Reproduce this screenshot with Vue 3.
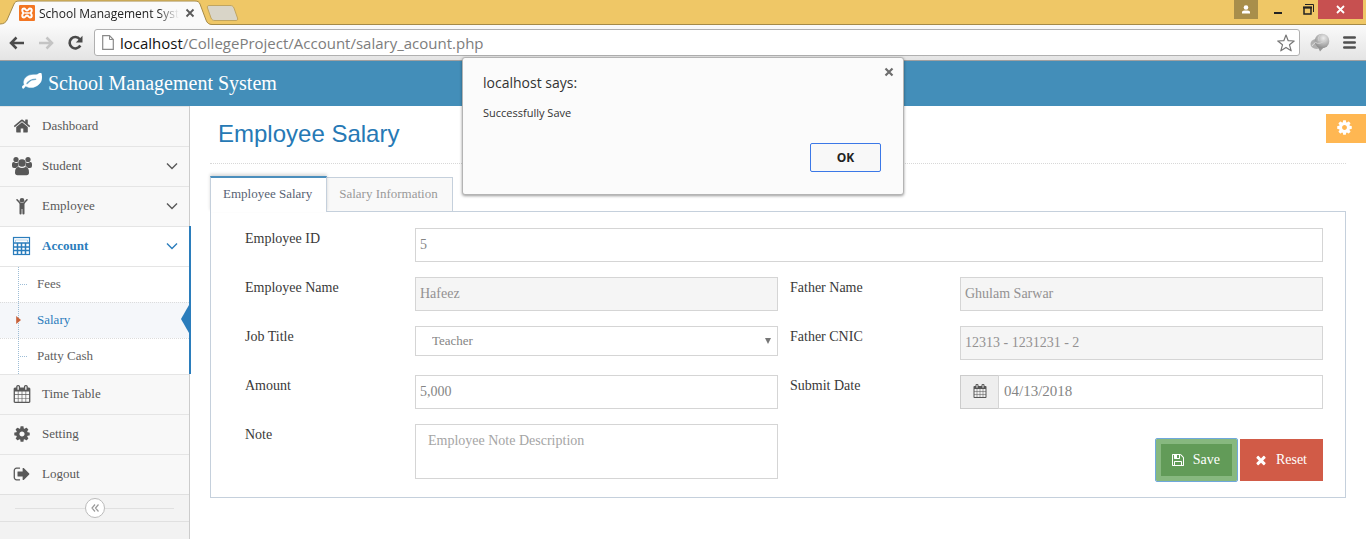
<script setup>
import { ref } from 'vue'

const FA = {
  home: 'M1472 992v480q0 26-19 45t-45 19h-384v-384h-256v384h-384q-26 0-45-19t-19-45v-480q0-1 .5-3t.5-3l575-474 575 474q1 2 1 6zm223-69l-62 74q-8 9-21 11h-3q-13 0-21-7l-692-577-692 577q-12 8-24 7-13-2-21-11l-62-74q-8-10-7-23.5t11-21.5l719-599q32-26 76-26t76 26l244 204v-195q0-14 9-23t23-9h192q14 0 23 9t9 23v408l219 182q10 8 11 21.5t-7 23.5z',
  cog: 'M1152 896q0-106-75-181t-181-75-181 75-75 181 75 181 181 75 181-75 75-181zm512-109v222q0 12-8 23t-20 13l-185 28q-19 54-39 91 35 50 107 138 10 12 10 25t-9 23q-27 37-99 108t-94 71q-12 0-26-9l-138-108q-44 23-91 38-16 136-29 186-7 28-36 28h-222q-14 0-24.5-8.5t-11.5-21.5l-28-184q-49-16-90-37l-141 107q-10 9-25 9-14 0-25-11-126-114-165-168-7-10-7-23 0-12 8-23 15-21 51-66.5t54-70.5q-27-50-41-99l-183-27q-13-2-21-12.5t-8-23.5v-222q0-12 8-23t19-13l186-28q14-46 39-92-40-57-107-138-10-12-10-24 0-10 9-23 26-36 98.5-107.5t94.5-71.5q13 0 26 10l138 107q44-23 91-38 16-136 29-186 7-28 36-28h222q14 0 24.5 8.5t11.5 21.5l28 184q49 16 90 37l142-107q9-9 24-9 13 0 25 10 129 119 165 170 7 8 7 22 0 12-8 23-15 21-51 66.5t-54 70.5q26 50 41 98l183 28q13 2 21 12.5t8 23.5z',
  calendar: 'M192 1664h288v-288h-288v288zm352 0h320v-288h-320v288zm-352-352h288v-320h-288v320zm352 0h320v-320h-320v320zm-352-384h288v-288h-288v288zm736 736h320v-288h-320v288zm-384-736h320v-288h-320v288zm768 736h288v-288h-288v288zm-384-352h320v-320h-320v320zm-352-864v-288q0-13-9.5-22.5t-22.5-9.5h-64q-13 0-22.5 9.5t-9.5 22.5v288q0 13 9.5 22.5t22.5 9.5h64q13 0 22.5-9.5t9.5-22.5zm736 864h288v-320h-288v320zm-384-384h320v-288h-320v288zm384 0h288v-288h-288v288zm32-480v-288q0-13-9.5-22.5t-22.5-9.5h-64q-13 0-22.5 9.5t-9.5 22.5v288q0 13 9.5 22.5t22.5 9.5h64q13 0 22.5-9.5t9.5-22.5zm384-64v1280q0 52-38 90t-90 38h-1408q-52 0-90-38t-38-90v-1280q0-52 38-90t90-38h128v-96q0-66 47-113t113-47h64q66 0 113 47t47 113v96h384v-96q0-66 47-113t113-47h64q66 0 113 47t47 113v96h128q52 0 90 38t38 90z',
  leaf: 'M1280 704q0-26-19-45t-45-19q-172 0-318 49.5t-259.5 134-235.5 219.5q-19 21-19 45 0 26 19 45t45 19q24 0 45-19 27-24 74-71t67-66q137-124 268.5-176t313.5-52q26 0 45-19t19-45zm512-198q0 95-20 193-46 224-184.5 383t-357.5 268q-214 108-438 108-148 0-286-47-15-5-88-42t-96-37q-16 0-39.5 32t-45 70-52.5 70-60 32q-43 0-63.5-17.5t-45.5-59.5q-2-4-6-11t-5.5-10-3-9.5-1.5-13.5q0-35 31-73.5t68-65.5 68-56 31-48q0-4-14-38t-16-44q-9-51-9-104 0-115 43.5-220t119-184.5 170.5-139 204-95.5q55-18 145-25.5t179.5-9 178.5-6 163.5-24 113.5-56.5l29.5-29.5 29.5-28 27-20 36.5-16 43.5-4.5q39 0 70.5 46t47.5 112 24 124 8 96z',
  floppy: 'M512 1536h768v-384h-768v384zm896 0h128v-896q0-14-10-38.5t-20-34.5l-281-281q-10-10-34-20t-39-10v416q0 40-28 68t-68 28h-576q-40 0-68-28t-28-68v-416h-128v1280h128v-416q0-40 28-68t68-28h832q40 0 68 28t28 68v416zm-384-928v-320q0-13-9.5-22.5t-22.5-9.5h-192q-13 0-22.5 9.5t-9.5 22.5v320q0 13 9.5 22.5t22.5 9.5h192q13 0 22.5-9.5t9.5-22.5zm640 32v928q0 40-28 68t-68 28h-1344q-40 0-68-28t-28-68v-1344q0-40 28-68t68-28h928q40 0 88 20t76 48l280 280q28 28 48 76t20 88z',
  times: 'M1490 1322q0 40-28 68l-136 136q-28 28-68 28t-68-28l-294-294-294 294q-28 28-68 28t-68-28l-136-136q-28-28-28-68t28-68l294-294-294-294q-28-28-28-68t28-68l136-136q28-28 68-28t68 28l294 294 294-294q28-28 68-28t68 28l136 136q28 28 28 68t-28 68l-294 294 294 294q28 28 28 68z',
  signout: 'M704 1440q0 4 1 20t.5 26.5-3 23.5-10 19.5-20.5 6.5h-320q-119 0-203.5-84.5t-84.5-203.5v-704q0-119 84.5-203.5t203.5-84.5h320q13 0 22.5 9.5t9.5 22.5q0 4 1 20t.5 26.5-3 23.5-10 19.5-20.5 6.5h-320q-66 0-113 47t-47 113v704q0 66 47 113t113 47h312l11.5 1 11.5 3 8 5.5 7 9 2 13.5zm928-544q0 26-19 45l-544 544q-19 19-45 19t-45-19-19-45v-288h-448q-26 0-45-19t-19-45v-384q0-26 19-45t45-19h448v-288q0-26 19-45t45-19 45 19l544 544q19 19 19 45z'
}

const menu = [
  { label: 'Dashboard', icon: 'home' },
  { label: 'Student', icon: 'users', children: true },
  { label: 'Employee', icon: 'child', children: true },
  {
    label: 'Account',
    icon: 'sheet',
    children: true,
    open: true,
    items: [{ label: 'Fees' }, { label: 'Salary', active: true }, { label: 'Patty Cash' }]
  },
  { label: 'Time Table', icon: 'calendar' },
  { label: 'Setting', icon: 'cog' },
  { label: 'Logout', icon: 'signout' }
]

const form = ref({
  id: '5',
  name: 'Hafeez',
  father: 'Ghulam Sarwar',
  job: 'Teacher',
  cnic: '12313 - 1231231 - 2',
  amount: '5,000',
  date: '04/13/2018',
  note: ''
})
const dialogOpen = ref(true)
</script>

<template>
  <div class="window">
    <header class="chrome">
      <div class="tabstrip">
        <div class="tab">
          <svg class="tab-shape" viewBox="0 0 212 25" aria-hidden="true">
            <path d="M0 25V24C4 24 6 22 7 20L14 4C15 2 16 1 19 1H195C198 1 199 2 200 4L206 20C207 23 209 24.500 212 24.500V25Z" fill="#fafafa" />
            <path d="M0 24C4 24 6 22 7 20L14 4C15 2 16 1 19 1H195C198 1 199 2 200 4L206 20C207 23 209 24.500 212 24.500" fill="none" stroke="#a58a47" />
          </svg>
          <svg class="favicon" viewBox="0 0 16 16" aria-hidden="true">
            <rect width="16" height="16" rx="1" fill="#f37623" />
            <path d="M5 3.500C3 3.500 2.500 6 4.500 8C2.500 10 3 12.500 5 12.500C6.500 12.500 6.500 10.500 8 10.500S9.500 12.500 11 12.500C13 12.500 13.500 10 11.500 8C13.500 6 13 3.500 11 3.500C9.500 3.500 9.500 5.500 8 5.500S6.500 3.500 5 3.500Z" fill="none" stroke="#fff" stroke-width="2" />
            <path d="M5.500 8H10.500" stroke="#fff" stroke-width="1.500" />
          </svg>
          <span class="tab-title">School Management System</span>
          <button class="bare tab-close" type="button" aria-label="Close tab">
            <svg width="10" height="10" viewBox="0 0 10 10"><path d="M1.500 1.500L8.500 8.500M8.500 1.500L1.500 8.500" stroke="#5a5a5a" stroke-width="1.800" /></svg>
          </button>
        </div>
        <button class="bare newtab" type="button" aria-label="New tab">
          <svg width="33" height="16" viewBox="0 0 33 16"><path d="M3 .5H24C26 .5 27 1 28 3L31.500 13C32 14.500 31.500 15.500 30 15.500H9C7 15.500 6 15 5 13L1.500 3C1 1.500 1.500 .5 3 .5Z" fill="#d9d5c8" stroke="#c0a560" /></svg>
        </button>
        <div class="controls">
          <button class="bare profile" type="button" aria-label="Profile">
            <svg width="10" height="9" viewBox="0 0 10 9"><circle cx="5" cy="2.500" r="2.300" fill="#fff" /><path d="M1 8.500V7C1 5.500 3 5.500 5 5.500S9 5.500 9 7V8.500Z" fill="#fff" /></svg>
          </button>
          <button class="bare minimize" type="button" aria-label="Minimize">
            <svg width="8" height="8" viewBox="0 0 8 8"><path d="M0 7H8" stroke="#222" stroke-width="2" /></svg>
          </button>
          <button class="bare restore" type="button" aria-label="Restore">
            <svg width="11" height="11" viewBox="0 0 11 11"><path d="M2 .5H10.500V8" fill="none" stroke="#222" /><path d="M1 3.500H8V10H1Z" fill="none" stroke="#222" stroke-width="1.500" /><path d="M0 3.500H9" stroke="#222" stroke-width="2" /></svg>
          </button>
          <button class="bare closewin" type="button" aria-label="Close">
            <svg width="9" height="9" viewBox="0 0 9 9"><path d="M1 1L8 8M8 1L1 8" stroke="#fff" stroke-width="1.800" /></svg>
          </button>
        </div>
      </div>
      <div class="toolbar">
        <button class="bare" type="button" aria-label="Back">
          <svg width="16" height="14" viewBox="0 0 16 14"><path d="M15 7H3M7.500 1.500L2 7L7.500 12.500" fill="none" stroke="#4a4a4a" stroke-width="2.500" /></svg>
        </button>
        <button class="bare" type="button" aria-label="Forward">
          <svg width="16" height="14" viewBox="0 0 16 14"><path d="M1 7H13M8.500 1.500L14 7L8.500 12.500" fill="none" stroke="#c4c4c4" stroke-width="2.500" /></svg>
        </button>
        <button class="bare" type="button" aria-label="Reload">
          <svg width="16" height="16" viewBox="0 0 16 16"><path d="M12.800 4.200A5.700 5.700 0 1 0 13.300 10.500" fill="none" stroke="#4a4a4a" stroke-width="2.600" /><path d="M15.500 .8V7.500H8.800Z" fill="#4a4a4a" /></svg>
        </button>
        <div class="omnibox">
          <svg width="12" height="15" viewBox="0 0 12 15" aria-hidden="true"><path d="M.7 .7H7.500L11.300 4.500V14.300H.7Z" fill="#fff" stroke="#8a8a8a" stroke-width="1.200" /><path d="M7.500 .7V4.500H11.300" fill="none" stroke="#8a8a8a" /></svg>
          <span class="url"><b>localhost</b>/CollegeProject/Account/salary_acount.php</span>
          <button class="bare" type="button" aria-label="Bookmark">
            <svg width="18" height="18" viewBox="0 0 18 18"><path d="M9 1L11.200 6.700L17.200 7L12.500 10.800L14.200 16.800L9 13.400L3.800 16.800L5.500 10.800L.8 7L6.800 6.700Z" fill="#fff" stroke="#777" stroke-width="1.200" stroke-linejoin="round" /></svg>
          </button>
        </div>
        <button class="bare" type="button" aria-label="Extension">
          <svg width="20" height="19" viewBox="0 0 20 19">
            <defs><radialGradient id="ball" cx=".6" cy=".3" r=".75"><stop offset="0" stop-color="#ececec" /><stop offset="1" stop-color="#888" /></radialGradient></defs>
            <ellipse cx="6.500" cy="11" rx="6" ry="5" fill="#b0b0b0" /><path d="M2 13Q5 8 9 10" fill="none" stroke="#ddd" />
            <path d="M8 14L10 18.500L14 14Z" fill="#959595" /><circle cx="12" cy="8" r="7.300" fill="url(#ball)" /><path d="M5 9Q9 13 17 6M10 2Q7 5 9 8" fill="none" stroke="#d0d0d0" />
          </svg>
        </button>
        <button class="bare" type="button" aria-label="Menu">
          <svg width="13" height="13" viewBox="0 0 13 13"><path d="M1.300 1.500H11.700M1.300 6.500H11.700M1.300 11.500H11.700" stroke="#505050" stroke-width="2.600" stroke-linecap="round" /></svg>
        </button>
      </div>
    </header>

    <div class="navbar">
      <a class="brand" href="#">
        <svg width="20" height="20" viewBox="0 150 1792 1792" aria-hidden="true"><path :d="FA.leaf" fill="#fff" stroke="#fff" stroke-width="40" /></svg>
        School Management System
      </a>
    </div>

    <div class="main">
      <nav class="sidebar">
        <ul class="menu">
          <li v-for="m in menu" :key="m.label" :class="{ open: m.open }">
            <a class="item" href="#">
              <svg v-if="m.icon === 'users'" class="micon" viewBox="0 0 20 20">
                <g fill="currentColor"><circle cx="4" cy="3.500" r="2.600" /><circle cx="16" cy="3.500" r="2.600" /><path d="M0 10V8Q0 5.800 2 6Q4 7.500 6 6.500Q5.500 9 7 10.300Q5 10.500 4 12H2Q0 12 0 10Z" /><path d="M20 10V8Q20 5.800 18 6Q16 7.500 14 6.500Q14.500 9 13 10.300Q15 10.500 16 12H18Q20 12 20 10Z" /><circle cx="10" cy="7" r="3.800" /><path d="M3 16.500Q3 11 6.500 11Q10 13 13.500 11Q17 11 17 16.500Q17 19.300 14.500 19.300H5.500Q3 19.300 3 16.500Z" /></g>
              </svg>
              <svg v-else-if="m.icon === 'child'" class="micon" viewBox="0 0 20 20">
                <circle cx="10" cy="4.200" r="2.300" fill="currentColor" /><path d="M5 3.800L8.500 7.500H11.500L15 3.800" fill="none" stroke="currentColor" stroke-width="1.600" stroke-linecap="round" stroke-linejoin="round" /><path d="M7.500 7H12.500V17.500Q12.500 18.500 11.500 18.500Q10.400 18.500 10.400 17.500V13H9.600V17.500Q9.600 18.500 8.500 18.500Q7.500 18.500 7.500 17.500Z" fill="currentColor" />
              </svg>
              <svg v-else-if="m.icon === 'sheet'" class="micon" viewBox="0 0 20 20">
                <rect x="1.500" y="1.500" width="16" height="17" fill="none" stroke="currentColor" stroke-width="1.200" /><path d="M3.500 6V4H15.500V6" fill="none" stroke="currentColor" opacity=".35" /><path d="M1.500 7H17.500M1.500 11H17.500M1.500 14.500H17.500M5.500 7V18.500M9.500 7V18.500M13.500 7V18.500" stroke="currentColor" stroke-width="1.500" />
              </svg>
              <svg v-else class="micon fa" viewBox="0 0 1792 1792"><path :d="FA[m.icon]" fill="currentColor" /></svg>
              <span class="mtext">{{ m.label }}</span>
              <svg v-if="m.children" width="12" height="8" viewBox="0 0 12 8"><path d="M1 1.500L6 6.500L11 1.500" fill="none" stroke="currentColor" stroke-width="1.400" /></svg>
            </a>
            <ul v-if="m.items" class="submenu">
              <li v-for="s in m.items" :key="s.label" :class="{ active: s.active }"><a href="#">{{ s.label }}</a></li>
            </ul>
          </li>
        </ul>
        <div class="collapse">
          <button class="bare" type="button" aria-label="Collapse menu">
            <svg width="8" height="8" viewBox="0 0 8 8"><path d="M4 .5L1 4L4 7.500M7.500 .5L4.500 4L7.500 7.500" fill="none" stroke="#999" stroke-width="1.200" /></svg>
          </button>
        </div>
      </nav>

      <main class="content">
        <button class="bare settings" type="button" aria-label="Settings">
          <svg width="17" height="17" viewBox="0 0 1792 1792"><path :d="FA.cog" fill="#fff" /></svg>
        </button>
        <div class="page-header"><h1>Employee Salary</h1></div>
        <div class="tabs" role="tablist">
          <button class="bare ptab on" type="button" role="tab" aria-selected="true">Employee Salary</button>
          <button class="bare ptab" type="button" role="tab" aria-selected="false">Salary Information</button>
        </div>
        <form class="panel" @submit.prevent="dialogOpen = true">
          <label for="f-id">Employee ID</label>
          <input id="f-id" v-model="form.id" class="wide" type="text" />

          <label for="f-name">Employee Name</label>
          <input id="f-name" v-model="form.name" type="text" readonly />
          <label for="f-father">Father Name</label>
          <input id="f-father" v-model="form.father" type="text" readonly />

          <label for="f-job">Job Title</label>
          <div class="selectbox">
            <select id="f-job" v-model="form.job"><option>Teacher</option></select>
            <svg width="6" height="6" viewBox="0 0 6 6" aria-hidden="true"><path d="M0 0H6L3 6Z" fill="#777" /></svg>
          </div>
          <label for="f-cnic">Father CNIC</label>
          <input id="f-cnic" v-model="form.cnic" type="text" readonly />

          <label for="f-amount">Amount</label>
          <input id="f-amount" v-model="form.amount" type="text" />
          <label for="f-date">Submit Date</label>
          <div class="group">
            <span class="addon"><svg width="14" height="14" viewBox="0 0 1792 1792" aria-hidden="true"><path :d="FA.calendar" fill="#555" /></svg></span>
            <input id="f-date" v-model="form.date" class="date" type="text" />
          </div>

          <label for="f-note">Note</label>
          <textarea id="f-note" v-model="form.note" placeholder="Employee Note Description"></textarea>
          <div class="actions">
            <button class="bare save" type="submit"><svg width="14" height="14" viewBox="0 0 1792 1792" aria-hidden="true"><path :d="FA.floppy" fill="#fff" /></svg>Save</button>
            <button class="bare reset" type="button"><svg width="14" height="14" viewBox="0 0 1792 1792" aria-hidden="true"><path :d="FA.times" fill="#fff" /></svg>Reset</button>
          </div>
        </form>
      </main>
    </div>

    <div v-if="dialogOpen" class="dialog" role="alertdialog" aria-labelledby="dlg-title" aria-describedby="dlg-text">
      <button class="bare dialog-x" type="button" aria-label="Close" @click="dialogOpen = false">
        <svg width="10" height="10" viewBox="0 0 10 10"><path d="M1.500 1.500L8.500 8.500M8.500 1.500L1.500 8.500" stroke="#6e6e6e" stroke-width="2.200" /></svg>
      </button>
      <h2 id="dlg-title">localhost says:</h2>
      <p id="dlg-text">Successfully Save</p>
      <button class="bare ok" type="button" @click="dialogOpen = false">OK</button>
    </div>
  </div>
</template>

<style>
body {
  margin: 0;
  background: #fff;
}
</style>

<style scoped>
.window, .window * { box-sizing: border-box; }
.window {
  position: relative;
  min-height: 100vh;
  display: flex;
  flex-direction: column;
  font-family: "Liberation Serif", "Times New Roman", serif;
  font-size: 13px;
  color: #393939;
}
.bare {
  margin: 0;
  padding: 0;
  border: 0;
  background: none;
  font: inherit;
  color: inherit;
  display: flex;
  align-items: center;
  justify-content: center;
  flex: none;
}
svg { display: block; flex: none; }
ul { list-style: none; margin: 0; padding: 0; }
a { color: inherit; text-decoration: none; }

/* Browser frame */
.chrome { font-family: "Open Sans", "Noto Sans", sans-serif; }
.tabstrip {
  height: 25px;
  background: #efc766;
  border-bottom: 1px solid #a58a47;
  display: flex;
  align-items: flex-start;
}
.tab {
  position: relative;
  width: 206px;
  height: 25px;
  padding: 1px 11px 0 19px;
  display: flex;
  align-items: center;
}
.tab-shape { position: absolute; left: 0; top: 0; width: 212px; height: 25px; }
.favicon { position: relative; width: 16px; height: 16px; }
.tab-title {
  position: relative;
  flex: 1;
  margin: 0 6px 0 4px;
  font-size: 12px;
  color: #222;
  white-space: nowrap;
  overflow: hidden;
  mask-image: linear-gradient(to right, #000 85%, transparent);
}
.tab-close { position: relative; }
.newtab { margin-top: 5px; }
.controls { margin-left: auto; display: flex; padding-right: 3px; }
.controls button { height: 19px; }
.controls .profile { width: 24px; background: #a88e4b; }
.minimize { width: 40px; }
.restore { width: 20px; }
.controls .closewin { width: 45px; background: #c75050; }
.toolbar {
  height: 36px;
  padding: 0 10px 0 9px;
  display: flex;
  align-items: center;
  gap: 13px;
  background: linear-gradient(#fafafa, #e4e4e4);
  border-bottom: 1px solid #a0a0a0;
}
.omnibox {
  flex: 1;
  margin: 0 -3px 0 -2px;
  height: 27px;
  padding: 0 4px 0 7px;
  display: flex;
  align-items: center;
  gap: 6px;
  background: #fff;
  border: 1px solid #b0b0b0;
  border-radius: 3px;
}
.url { flex: 1; font-size: 15px; line-height: 24px; color: #7d7d7d; white-space: nowrap; overflow: hidden; }
.url b { font-weight: 400; color: #111; }

/* Application bar */
.navbar { height: 45px; background: #438eb9; display: flex; align-items: center; padding: 0 22px 2px; }
.brand { display: flex; align-items: center; gap: 6px; font-size: 20px; line-height: 24px; color: #fff; }

.main { flex: 1; display: flex; align-items: stretch; }

/* Sidebar */
.sidebar { width: 190px; flex: none; background: #f2f2f2; border-right: 1px solid #ccc; }
.menu > li { position: relative; background: #f8f8f8; border-top: 1px solid #e5e5e5; color: #585858; }
.item { height: 39px; padding: 0 11px 2px 12px; display: flex; align-items: center; gap: 10px; }
.micon { width: 20px; height: 20px; }
.micon.fa { padding: 1px; }
.mtext { flex: 1; line-height: 18px; }
.menu > li.open { background: #fff; }
.open > .item { color: #2b7dbc; font-weight: 700; }
.open::after {
  content: "";
  position: absolute;
  right: -2px;
  top: -1px;
  bottom: 0;
  border-right: 2px solid #2b7dbc;
}
.submenu { position: relative; border-top: 1px solid #e5e5e5; }
.submenu::before {
  content: "";
  position: absolute;
  z-index: 1;
  left: 18px;
  top: 0;
  bottom: 0;
  border-left: 1px dotted #9dbdd6;
}
.submenu li { position: relative; }
.submenu li + li { border-top: 1px dotted #dcdcdc; }
.submenu li::before {
  content: "";
  position: absolute;
  left: 20px;
  top: 17px;
  width: 7px;
  border-top: 1px dotted #9dbdd6;
}
.submenu a { display: block; padding: 0 0 2px 37px; line-height: 33px; color: #616161; }
.submenu .active { background: #f5f7fa; }
.submenu .active a { color: #2b7dbc; }
.submenu .active::before {
  z-index: 2;
  left: 15px;
  top: 12px;
  width: 6px;
  height: 10px;
  border: 0;
  background: #c86139;
  clip-path: polygon(20% 10%, 100% 50%, 20% 90%);
}
.submenu .active::after {
  content: "";
  position: absolute;
  right: 0;
  top: 2px;
  width: 8px;
  height: 28px;
  background: #2b7dbc;
  clip-path: polygon(100% 0, 0 50%, 100% 100%);
}
.collapse {
  height: 28px;
  padding: 0 15px;
  display: flex;
  align-items: center;
  background: #f3f3f3;
  border-top: 1px solid #e0e0e0;
  border-bottom: 1px solid #e0e0e0;
}
.collapse::before, .collapse::after { content: ""; flex: 1; border-top: 1px solid #e0e0e0; }
.collapse button { width: 20px; height: 20px; border: 1px solid #bbb; border-radius: 50%; background: #fff; }

/* Page */
.content { position: relative; flex: 1; min-width: 0; padding: 8px 20px 24px; }
.settings { position: absolute; right: 0; top: 8px; width: 40px; height: 29px; padding: 0 3px 3px 0; background: #ffb752; }
.page-header { padding: 4px 8px 13px; border-bottom: 1px dotted #d8d8d8; }
h1 {
  margin: 0;
  font-family: "Liberation Sans", Arial, sans-serif;
  font-size: 24px;
  line-height: 32px;
  font-weight: 400;
  color: #2679b5;
}
.tabs { display: flex; align-items: flex-end; margin-top: 12px; }
.ptab {
  position: relative;
  height: 34px;
  padding: 0 14px 2px 12px;
  border: 1px solid #c5d0dc;
  border-left: 0;
  border-bottom: 0;
  background: #f9f9f9;
  color: #999;
}
.ptab.on {
  z-index: 1;
  height: 36px;
  margin-bottom: -1px;
  border-left: 1px solid #c5d0dc;
  border-top: 2px solid #4c8fbd;
  background: #fff;
  color: #576373;
  box-shadow: 0 -2px 3px rgba(0, 0, 0, 0.15);
}
.panel {
  border: 1px solid #c5d0dc;
  padding: 16px 22px 16px 34px;
  display: grid;
  grid-template-columns: 158px minmax(0, 1fr) 158px minmax(0, 1fr);
  gap: 15px 12px;
  align-items: start;
  font-size: 14px;
}
label { line-height: 22px; }
.panel input, select, textarea {
  display: block;
  width: 100%;
  margin: 0;
  border: 1px solid #d5d5d5;
  border-radius: 0;
  background: #fff;
  font-family: inherit;
  color: #858585;
  outline: none;
}
.panel input { height: 34px; padding: 0 4px; font-size: 14px; }
.panel input[readonly] { background: #f5f5f5; color: #939192; }
.panel .wide { grid-column: 2 / -1; }
.selectbox { position: relative; }
select { appearance: none; height: 30px; padding: 0 16px 2px; font-size: 13px; }
.selectbox svg { position: absolute; right: 7px; top: 12px; }
.group { display: flex; }
.addon {
  width: 38px;
  flex: none;
  display: flex;
  align-items: center;
  justify-content: center;
  padding-bottom: 2px;
  background: #eee;
  border: 1px solid #ccc;
  border-right: 0;
}
.panel .date { flex: 1; font-size: 15px; padding: 0 5px 2px; }
textarea { height: 55px; padding: 7px 12px; font-size: 14px; line-height: 18px; resize: none; }
textarea::placeholder { color: #a5a5a5; opacity: 1; }
.actions { grid-column: 3 / -1; display: flex; justify-content: flex-end; gap: 3px; padding-top: 15px; }
.actions button { height: 42px; gap: 8px; color: #fff; }
.actions .save {
  padding: 0 12px 0 10px;
  border: 5px solid #87b87f;
  background: #629b58;
  outline: 1px solid #6fa8dc;
  border-radius: 1px;
}
.actions .reset { padding: 0 16px 0 14px; background: #d15b47; }

/* Alert */
.dialog {
  position: absolute;
  z-index: 5;
  left: calc(50% - 221px);
  top: 57px;
  width: 442px;
  padding: 15px 22px 22px 20px;
  display: flex;
  flex-direction: column;
  background: #fbfbfb;
  border: 1px solid #b4b4b4;
  border-radius: 3px;
  box-shadow: 0 1px 3px rgba(0, 0, 0, 0.4);
  font-family: "Open Sans", "Noto Sans", sans-serif;
  color: #333;
}
.dialog-x { position: absolute; right: 9px; top: 9px; }
h2 { margin: 0; font-size: 14px; line-height: 20px; font-weight: 400; }
.dialog p { margin: 12px 0 0; font-size: 11px; line-height: 16px; }
.dialog .ok {
  align-self: flex-end;
  margin-top: 22px;
  width: 71px;
  height: 29px;
  border: 1px solid #3b78e7;
  border-radius: 2px;
  background: #f8f8f8;
  font-size: 12px;
  font-weight: 700;
  color: #222;
}
</style>
